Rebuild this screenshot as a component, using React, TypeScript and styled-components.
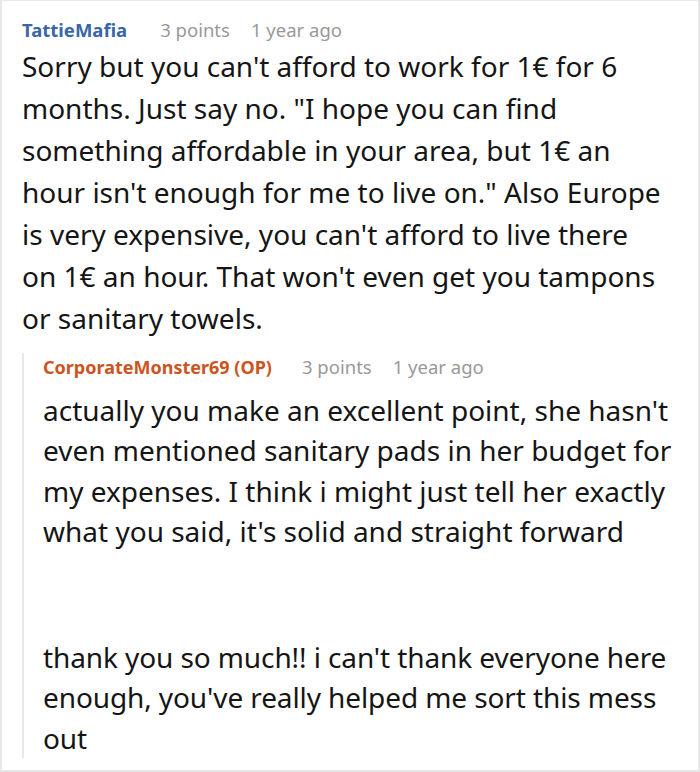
import React from 'react';
import styled, { createGlobalStyle } from 'styled-components';

const Global = createGlobalStyle`
  html, body { margin: 0; padding: 0; background: #fff; }
  body { font-family: "Noto Sans", "Open Sans", sans-serif; }
`;

const Frame = styled.div`
  width: 700px;
  height: 772px;
  box-sizing: border-box;
  border: 2px solid #e8e8e8;
  border-top-width: 1px;
  padding: 15px 0 0 20px;
  overflow: hidden;
  background: #fff;
`;

const Meta = styled.div`
  display: flex;
  align-items: baseline;
  height: 28px;
  line-height: 28px;
  white-space: nowrap;
`;

const Author = styled.span<{ $op?: boolean }>`
  font-weight: 700;
  font-size: ${p => (p.$op ? '18px' : '18.5px')};
  color: ${p => (p.$op ? '#cc5420' : '#3a66a5')};
  margin-right: ${p => (p.$op ? '30px' : '33px')};
`;

const Stat = styled.span`
  color: #999;
  font-size: 18.5px;
  margin-right: 21px;
`;

const Body = styled.p`
  margin: 1px 0 0;
  font-size: 28px;
  line-height: 42px;
  color: #151515;
  white-space: nowrap;
`;

const Reply = styled.div`
  margin-top: 14px;
  border-left: 2px solid #e8e8e8;
  padding-left: 19px;
`;

const ReplyBody = styled(Body)`
  margin-top: 9px;
  line-height: 40.3px;
`;

const Gap = styled.div`
  height: 86px;
`;

const Closing = styled(ReplyBody)`
  margin-top: 0;
  letter-spacing: -0.1px;
`;

const Header: React.FC<{ author: string; op?: boolean; points: string; time: string }> = ({ author, op, points, time }) => (
  <Meta>
    <Author $op={op}>{author}</Author>
    <Stat>{points}</Stat>
    <Stat>{time}</Stat>
  </Meta>
);

export default function App() {
  return (
    <>
      <Global />
      <Frame>
        <Header author="TattieMafia" points="3 points" time="1 year ago" />
        <Body>
          Sorry but you can't afford to work for 1€ for 6<br />
          months. Just say no. "I hope you can find<br />
          something affordable in your area, but 1€ an<br />
          hour isn't enough for me to live on." Also Europe<br />
          is very expensive, you can't afford to live there<br />
          on 1€ an hour. That won't even get you tampons<br />
          or sanitary towels.
        </Body>
        <Reply>
          <Header author="CorporateMonster69 (OP)" op points="3 points" time="1 year ago" />
          <ReplyBody>
            actually you make an excellent point, she hasn't<br />
            even mentioned sanitary pads in her budget for<br />
            my expenses. I think i might just tell her exactly<br />
            what you said, it's solid and straight forward
          </ReplyBody>
          <Gap />
          <Closing>
            thank you so much!! i can't thank everyone here<br />
            enough, you've really helped me sort this mess<br />
            out
          </Closing>
        </Reply>
      </Frame>
    </>
  );
}
